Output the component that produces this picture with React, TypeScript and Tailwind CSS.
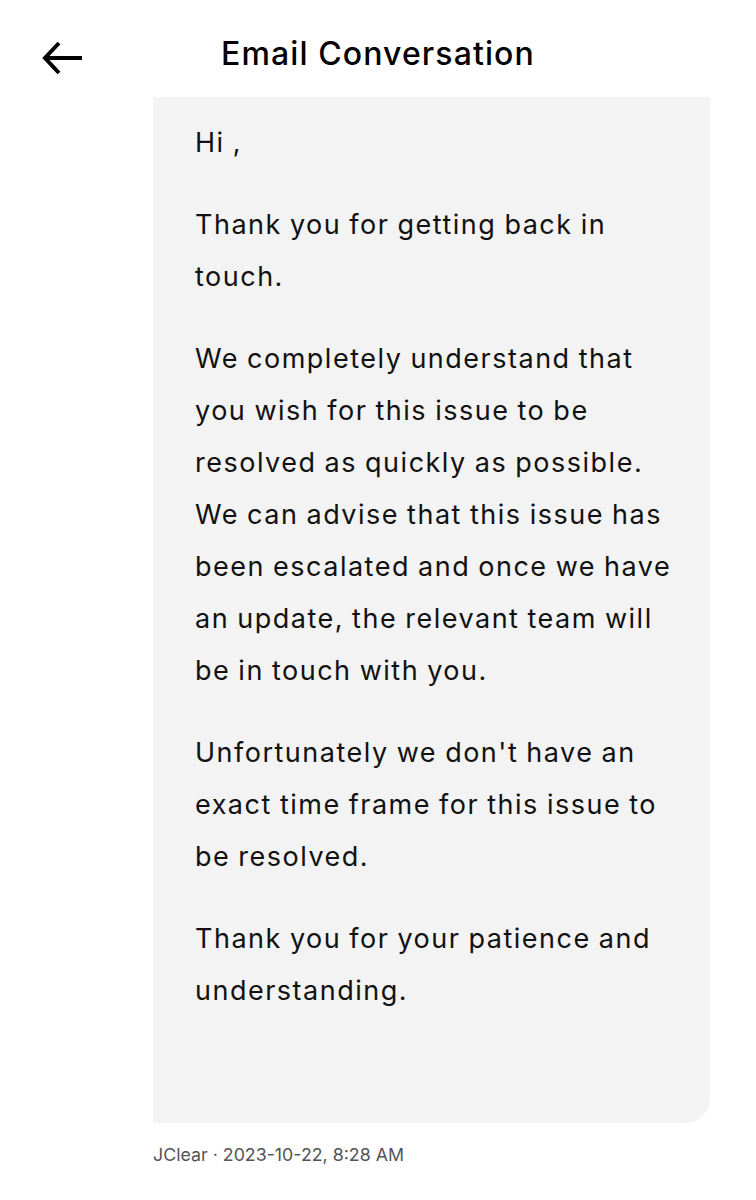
import React from "react";

const paragraphs: string[][] = [
  ["Hi ,"],
  ["Thank you for getting back in", "touch."],
  [
    "We completely understand that",
    "you wish for this issue to be",
    "resolved as quickly as possible.",
    "We can advise that this issue has",
    "been escalated and once we have",
    "an update, the relevant team will",
    "be in touch with you.",
  ],
  [
    "Unfortunately we don't have an",
    "exact time frame for this issue to",
    "be resolved.",
  ],
  ["Thank you for your patience and", "understanding."],
];

export default function App() {
  return (
    <div className="w-[756px] h-[1200px] bg-white overflow-hidden" style={{ fontFamily: "Inter, 'Noto Sans', sans-serif" }}>
      <div className="h-[97px] flex items-center relative">
        <div className="absolute left-[40px] top-[40px]">
          <svg width="44" height="36" viewBox="0 0 44 36" fill="none">
            <path d="M4 18H42" stroke="#000" strokeWidth="4" />
            <path d="M19 3L5 18L19 33" stroke="#000" strokeWidth="4" fill="none" />
          </svg>
        </div>
        <div className="w-full text-center text-[32px] font-medium text-black leading-none tracking-[1.1px] mt-[10px]">Email Conversation</div>
      </div>
      <div className="ml-[153px] w-[557px] h-[1026px] bg-[#f3f3f3] rounded-br-[24px] pl-[42px] pt-[20px] text-[27px] leading-[52px] tracking-[1.5px] [word-spacing:-1px] text-[#111111]">
        {paragraphs.map((p, i) => (
          <div key={i} className={i === 0 ? "" : "mt-[30px]"}>
            {p.map((l, j) => (
              <div key={j} className="whitespace-nowrap">{l}</div>
            ))}
          </div>
        ))}
      </div>
      <div className="ml-[153px] mt-[19px] text-[17.8px] text-[#545454]">JClear · 2023-10-22, 8:28 AM</div>
    </div>
  );
}
